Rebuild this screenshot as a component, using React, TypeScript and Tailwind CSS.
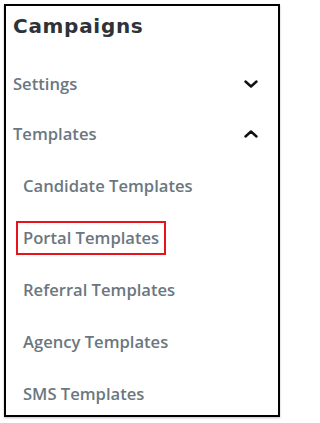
import React from "react";

const templates = [
  "Candidate Templates",
  "Portal Templates",
  "Referral Templates",
  "Agency Templates",
  "SMS Templates",
];

function Chevron({ up }: { up?: boolean }) {
  return (
    <svg width="14" height="8" viewBox="0 0 14 8" className={up ? "rotate-180" : ""}>
      <polyline
        points="1.5,1.5 7,6.5 12.5,1.5"
        fill="none"
        stroke="#111"
        strokeWidth="2.4"
        strokeLinecap="round"
        strokeLinejoin="round"
      />
    </svg>
  );
}

export default function App() {
  return (
    <div className="bg-white w-[285px] h-[423px] p-1 font-['Open_Sans',sans-serif]">
      <div className="w-[276px] h-[413px] border-2 border-black bg-white shadow-[0_1px_2px_rgba(0,0,0,0.25)]">
        <h1 className="pt-[6px] px-[7px] h-[34px] text-[20px] leading-[28px] font-bold text-[#2d3338] tracking-[0.7px] font-['DejaVu_Sans',sans-serif]">
          Campaigns
        </h1>

        <div className="mt-[32px] flex flex-col gap-[26px] pl-[7px] pr-[20px]">
          <div className="flex items-center justify-between h-[24px]">
            <span className="text-[16.6px] leading-[24px] font-semibold text-[#6b7780]">Settings</span>
            <Chevron />
          </div>
          <div className="flex items-center justify-between h-[24px]">
            <span className="text-[16.6px] leading-[24px] font-semibold text-[#6b7780]">Templates</span>
            <Chevron up />
          </div>
        </div>

        <ul className="mt-[23px] pl-[10px] flex flex-col gap-[18px]">
          {templates.map((t) => (
            <li
              key={t}
              className={
                "w-fit border-2 px-[5px] py-[3px] text-[16.6px] leading-[24px] font-semibold text-[#6b7780] " +
                (t === "Portal Templates" ? "border-[#e8141b]" : "border-transparent")
              }
            >
              {t}
            </li>
          ))}
        </ul>
      </div>
    </div>
  );
}
